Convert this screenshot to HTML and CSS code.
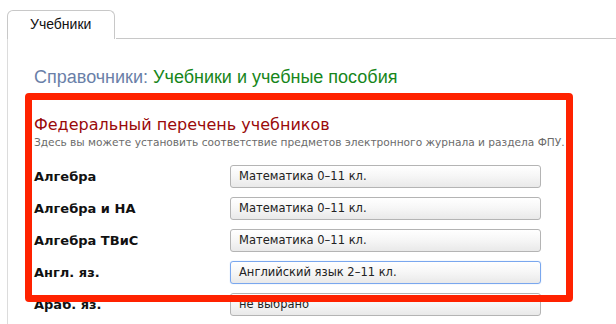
FILE: index.html
```html
<!DOCTYPE html>
<html lang="ru">
<head>
<meta charset="utf-8">
<title>Учебники</title>
<link rel="stylesheet" href="styles.css">
</head>
<body>
<div class="tabbar">
  <div class="tab">Учебники</div>
  <div class="tab-rest"></div>
</div>
<div class="panel">
  <h1 class="crumbs"><span class="crumb-root">Справочники:</span> <span class="crumb-page">Учебники и учебные пособия</span></h1>
  <h2 class="section-title">Федеральный перечень учебников</h2>
  <p class="section-desc">Здесь вы можете установить соответствие предметов электронного журнала и раздела ФПУ.</p>
  <div class="rows">
    <div class="label">Алгебра</div><div class="select">Математика 0–11 кл.</div>
    <div class="label">Алгебра и НА</div><div class="select">Математика 0–11 кл.</div>
    <div class="label">Алгебра ТВиС</div><div class="select">Математика 0–11 кл.</div>
    <div class="label">Англ. яз.</div><div class="select focused">Английский язык 2–11 кл.</div>
    <div class="label">Араб. яз.</div><div class="select">не выбрано</div>
  </div>
  <div class="highlight"></div>
</div>
</body>
</html>
```
FILE: styles.css
```css
html, body {
  margin: 0;
  padding: 0;
  background: #fff;
  height: 324px;
  overflow: hidden;
}
body {
  font-family: "DejaVu Sans", Verdana, sans-serif;
  color: #000;
}
.tabbar {
  display: flex;
  align-items: flex-end;
  padding: 10px 0 0 7px;
  height: 39px;
  box-sizing: border-box;
}
.tab {
  width: 108px;
  height: 29px;
  box-sizing: border-box;
  border: 1px solid #c8c8c8;
  border-bottom: none;
  border-radius: 6px 6px 0 0;
  background: #fff;
  font-family: "Liberation Sans", Arial, sans-serif;
  font-size: 14px;
  line-height: 27px;
  padding-left: 22px;
  color: #111;
}
.tab-rest {
  flex: 1;
  height: 1px;
  border-bottom: 1px solid #c8c8c8;
  margin-left: 1px;
}
.panel {
  position: relative;
  margin-left: 7px;
  border-left: 1px solid #dcdcdc;
  padding: 26px 0 0 26px;
  height: 285px;
  box-sizing: border-box;
  overflow: hidden;
}
.crumbs {
  margin: 0;
  font-family: "Liberation Sans", Arial, sans-serif;
  font-weight: normal;
  font-size: 18px;
  line-height: 24px;
}
.crumb-root { color: #6a7fa8; }
.crumb-page { color: #17861a; }
.section-title {
  margin: 26px 0 0 0;
  font-weight: normal;
  font-size: 16px;
  line-height: 20px;
  color: #9a0a0a;
}
.section-desc {
  margin: 0;
  font-size: 10.6px;
  line-height: 14px;
  color: #6b6b6b;
}
.rows {
  margin-top: 16px;
  display: grid;
  grid-template-columns: 196px 311px;
  grid-auto-rows: 23px;
  row-gap: 9px;
  align-items: center;
}
.label {
  font-weight: bold;
  font-size: 13px;
  color: #111;
}
.select {
  height: 23px;
  box-sizing: border-box;
  border: 1px solid #b4b4b4;
  border-radius: 3px;
  background: linear-gradient(#ffffff, #f7f7f7 45%, #e9e9e9);
  font-size: 11.5px;
  line-height: 21px;
  padding-left: 8px;
  color: #222;
}
.select.focused {
  border-color: #7aa7ee;
  box-shadow: 0 0 1px #9cc0f5;
}
.highlight {
  position: absolute;
  left: 17px;
  top: 54px;
  width: 548px;
  height: 209px;
  box-sizing: border-box;
  border: 7px solid #ff2200;
  border-radius: 4px;
  pointer-events: none;
}
```
